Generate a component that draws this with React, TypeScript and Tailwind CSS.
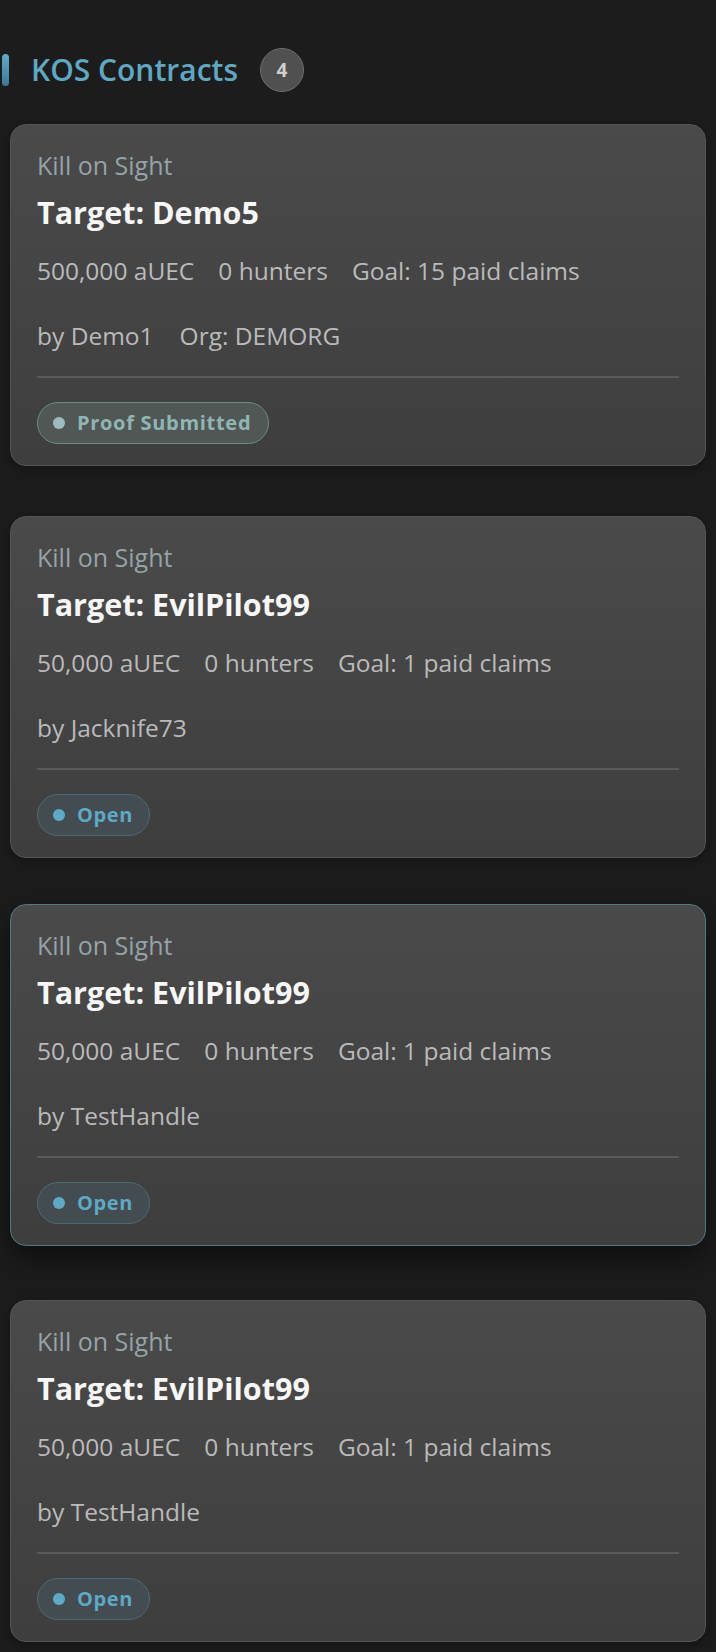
type Contract = {
  target: string
  reward: string
  goal: number
  by: string
  org?: string
  status: 'proof' | 'open'
  active?: boolean
}

const contracts: Contract[] = [
  { target: 'Demo5', reward: '500,000', goal: 15, by: 'Demo1', org: 'DEMORG', status: 'proof' },
  { target: 'EvilPilot99', reward: '50,000', goal: 1, by: 'Jacknife73', status: 'open' },
  { target: 'EvilPilot99', reward: '50,000', goal: 1, by: 'TestHandle', status: 'open', active: true },
  { target: 'EvilPilot99', reward: '50,000', goal: 1, by: 'TestHandle', status: 'open' },
]

function StatusBadge({ status }: { status: Contract['status'] }) {
  if (status === 'proof') {
    return (
      <span className="inline-flex items-center gap-[12px] h-[42px] pl-[15px] pr-[17px] rounded-full border border-[#6b8c86] bg-[#505755] text-[#8fb6b2] text-[20px] font-bold tracking-[0.7px]">
        <span className="w-[12px] h-[12px] rounded-full bg-[#9cbcc0]"></span>
        Proof Submitted
      </span>
    )
  }
  return (
    <span className="inline-flex items-center gap-[12px] h-[42px] pl-[15px] pr-[16px] rounded-full border border-[#4d6a74] bg-[#424c51] text-[#5ea9c4] text-[20px] font-bold tracking-[0.6px]">
      <span className="w-[12px] h-[12px] rounded-full bg-[#5ea9c4]"></span>
      Open
    </span>
  )
}

function ContractCard({ c }: { c: Contract }) {
  return (
    <div
      className={
        c.active
          ? 'rounded-[16px] border border-[#4f7784] bg-gradient-to-b from-[#4a4a4a] to-[#3e3e3e] px-[26px] pt-[25px] pb-[21px] -translate-y-[4px] shadow-[0_12px_32px_rgba(0,0,0,0.55)]'
          : 'rounded-[16px] border border-[#555555] bg-gradient-to-b from-[#4a4a4a] to-[#3e3e3e] px-[26px] pt-[25px] pb-[21px] shadow-[0_4px_12px_rgba(0,0,0,0.3)]'
      }
    >
      {/* Type */}
      <div className="text-[25px] leading-[30px] text-[#95a3a8]">Kill on Sight</div>

      {/* Target */}
      <div className="mt-[13px] text-[30.5px] leading-[38px] font-bold text-[#f7f7f7]">
        Target: {c.target}
      </div>

      {/* Stats */}
      <div className="mt-[25px] flex gap-[24px] text-[24.5px] leading-[30px] text-[#bababa]">
        <span>{c.reward} aUEC</span>
        <span>0 hunters</span>
        <span>Goal: {c.goal} paid claims</span>
      </div>

      {/* Owner */}
      <div className="mt-[35px] flex gap-[26px] text-[24.5px] leading-[30px] text-[#bababa]">
        <span>by {c.by}</span>
        {c.org && <span>Org: {c.org}</span>}
      </div>

      <div className="mt-[25px] h-[2px] bg-[#5a5a5a]"></div>

      <div className="mt-[24px] flex">
        <StatusBadge status={c.status} />
      </div>
    </div>
  )
}

export default function App() {
  return (
    <div className="min-h-screen bg-[#1c1c1c] pt-[48px] pb-[12px]" style={{ fontFamily: '"Open Sans", "Noto Sans", sans-serif' }}>
      {/* Header */}
      <div className="flex items-center h-[44px] pl-[2px]">
        <div className="w-[7px] h-[32px] rounded-full bg-gradient-to-b from-[#62acc8] to-[#3d7894]"></div>
        <h2 className="ml-[22px] text-[30px] font-semibold text-[#5ea8c4] leading-none">KOS Contracts</h2>
        <div className="ml-[22px] w-[44px] h-[44px] rounded-full bg-[#505050] border border-[#6e6e6e] flex items-center justify-center text-[19px] font-bold text-[#d0d0d0]">
          4
        </div>
      </div>

      {/* Cards */}
      <div className="mt-[32px] px-[10px] flex flex-col gap-[50px]">
        {contracts.map((c, i) => (
          <ContractCard key={i} c={c} />
        ))}
      </div>
    </div>
  )
}
